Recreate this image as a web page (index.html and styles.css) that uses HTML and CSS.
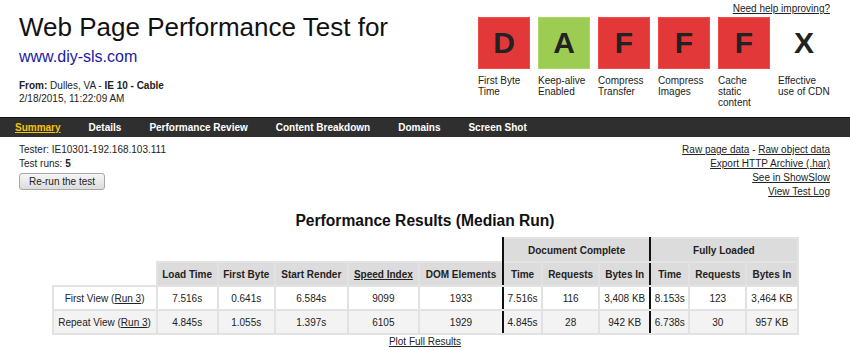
FILE: index.html
```html
<!DOCTYPE html>
<html lang="en">
<head>
    <meta charset="UTF-8">
    <title>Web Page Performance Test for www.diy-sls.com</title>
    <link rel="stylesheet" href="styles.css">
</head>
<body>
    <header class="top">
        <div class="test-info">
            <h1>Web Page Performance Test for</h1>
            <a class="url" href="#">www.diy-sls.com</a>
            <p class="from"><b>From:</b> Dulles, VA - <b>IE 10 - Cable</b></p>
            <p class="date">2/18/2015, 11:22:09 AM</p>
        </div>
        <div class="grades-wrap">
            <a class="help" href="#">Need help improving?</a>
            <ul class="grades">
                <li class="grade"><div class="box bad">D</div><span class="label">First Byte Time</span></li>
                <li class="grade"><div class="box good">A</div><span class="label">Keep-alive Enabled</span></li>
                <li class="grade"><div class="box bad">F</div><span class="label">Compress Transfer</span></li>
                <li class="grade"><div class="box bad">F</div><span class="label">Compress Images</span></li>
                <li class="grade"><div class="box bad">F</div><span class="label">Cache static content</span></li>
                <li class="grade"><div class="box none">X</div><span class="label">Effective use of CDN</span></li>
            </ul>
        </div>
    </header>

    <nav class="tabs">
        <a class="current" href="#">Summary</a>
        <a href="#">Details</a>
        <a href="#">Performance Review</a>
        <a href="#">Content Breakdown</a>
        <a href="#">Domains</a>
        <a href="#">Screen Shot</a>
    </nav>

    <section class="meta">
        <div class="meta-left">
            <p>Tester: IE10301-192.168.103.111</p>
            <p>Test runs: <b>5</b></p>
            <button type="button" class="rerun">Re-run the test</button>
        </div>
        <div class="meta-right">
            <p><a href="#">Raw page data</a> - <a href="#">Raw object data</a></p>
            <p><a href="#">Export HTTP Archive (.har)</a></p>
            <p><a href="#">See in ShowSlow</a></p>
            <p><a href="#">View Test Log</a></p>
        </div>
    </section>

    <h2 class="results-title">Performance Results (Median Run)</h2>

    <table class="results">
        <colgroup>
            <col style="width: 104px">
            <col style="width: 61px">
            <col style="width: 57px">
            <col style="width: 73px">
            <col style="width: 71px">
            <col style="width: 84px">
            <col style="width: 39px">
            <col style="width: 57px">
            <col style="width: 51px">
            <col style="width: 39px">
            <col style="width: 57px">
            <col style="width: 51px">
        </colgroup>
        <thead>
            <tr>
                <th class="blank sep" colspan="6"></th>
                <th class="sep" colspan="3">Document Complete</th>
                <th colspan="3">Fully Loaded</th>
            </tr>
            <tr>
                <th class="blank"></th>
                <th>Load Time</th>
                <th>First Byte</th>
                <th>Start Render</th>
                <th><a href="#">Speed Index</a></th>
                <th class="sep">DOM Elements</th>
                <th>Time</th>
                <th>Requests</th>
                <th class="sep">Bytes In</th>
                <th>Time</th>
                <th>Requests</th>
                <th>Bytes In</th>
            </tr>
        </thead>
        <tbody>
            <tr>
                <td>First View (<a href="#">Run 3</a>)</td>
                <td>7.516s</td>
                <td>0.641s</td>
                <td>6.584s</td>
                <td>9099</td>
                <td class="sep">1933</td>
                <td>7.516s</td>
                <td>116</td>
                <td class="sep">3,408 KB</td>
                <td>8.153s</td>
                <td>123</td>
                <td>3,464 KB</td>
            </tr>
            <tr class="alt">
                <td>Repeat View (<a href="#">Run 3</a>)</td>
                <td>4.845s</td>
                <td>1.055s</td>
                <td>1.397s</td>
                <td>6105</td>
                <td class="sep">1929</td>
                <td>4.845s</td>
                <td>28</td>
                <td class="sep">942 KB</td>
                <td>6.738s</td>
                <td>30</td>
                <td>957 KB</td>
            </tr>
        </tbody>
    </table>

    <div class="plot"><a href="#">Plot Full Results</a></div>
</body>
</html>
```

FILE: styles.css
```css
/* General */
body {
    margin: 0;
    font-family: "Liberation Sans", Arial, sans-serif;
    font-size: 10px;
    color: #222;
    background: #fff;
}

p {
    margin: 0;
}

a {
    color: #222;
}

/* Header */
.top {
    display: flex;
    justify-content: space-between;
    align-items: flex-start;
    padding: 0 20px 0 19px;
    height: 107px;
}

.test-info {
    padding-top: 12px;
}

.test-info h1 {
    margin: 0;
    font-size: 26px;
    font-weight: normal;
    line-height: 30px;
    color: #111;
}

.url {
    display: block;
    margin-top: 6px;
    font-size: 16px;
    line-height: 18px;
    color: #1a1aa6;
    text-decoration: none;
}

.from {
    margin-top: 13px;
    line-height: 13px;
}

.date {
    line-height: 13px;
}

/* Grades */
.grades-wrap {
    display: flex;
    flex-direction: column;
    align-items: flex-end;
    padding-top: 2px;
}

.help {
    line-height: 13px;
}

.grades {
    display: flex;
    gap: 8px;
    list-style: none;
    margin: 2px 0 0;
    padding: 0;
}

.grade {
    width: 52px;
}

.box {
    box-sizing: border-box;
    width: 52px;
    height: 52px;
    font-size: 30px;
    font-weight: bold;
    line-height: 50px;
    text-align: center;
    color: #222;
}

.box.bad {
    background-color: #e3383a;
    border: 1px solid #f04a4a;
}

.box.good {
    background-color: #9dcc52;
    border: 1px solid #acd866;
}

.box.none {
    border: 1px solid transparent;
}

.label {
    display: block;
    width: 54px;
    margin-top: 6px;
    line-height: 11px;
}

/* Tabs */
.tabs {
    display: flex;
    gap: 28px;
    margin-top: 10px;
    height: 20px;
    padding-left: 15px;
    background-color: #2f2f2f;
    border-top: 1px solid #111;
    box-sizing: border-box;
}

.tabs a {
    font-weight: bold;
    line-height: 19px;
    color: #fff;
    text-decoration: none;
}

.tabs a.current {
    color: #f5c400;
    text-decoration: underline;
}

/* Test meta */
.meta {
    display: flex;
    justify-content: space-between;
    padding: 6px 20px 0 19px;
}

.meta p {
    line-height: 14px;
}

.meta-right {
    text-align: right;
}

.rerun {
    display: block;
    width: 86px;
    height: 17px;
    margin-top: 2px;
    padding: 0;
    font-family: inherit;
    font-size: 10px;
    color: #222;
    background: linear-gradient(#f6f6f6, #dcdcdc);
    border: 1px solid #a8a8a8;
    border-radius: 3px;
}

/* Results */
.results-title {
    margin: 12px 0 0;
    font-size: 15.6px;
    line-height: 20px;
    text-align: center;
    color: #111;
}

.results {
    margin: 6px auto 0;
    width: 747px;
    table-layout: fixed;
    border-collapse: collapse;
}

.results th,
.results td {
    height: 22px;
    padding: 0;
    text-align: center;
    white-space: nowrap;
    border: 2px solid #e2e2e2;
}

.results th {
    font-weight: bold;
    background-color: #dcdcdc;
    color: #222;
}

.results th.blank {
    background: none;
    border: none;
}

.results .sep,
.results th.blank.sep {
    border-right: 2px solid #111;
}

.results tr.alt td {
    background-color: #f3f3f3;
}

.plot {
    text-align: center;
    line-height: 14px;
}
```
